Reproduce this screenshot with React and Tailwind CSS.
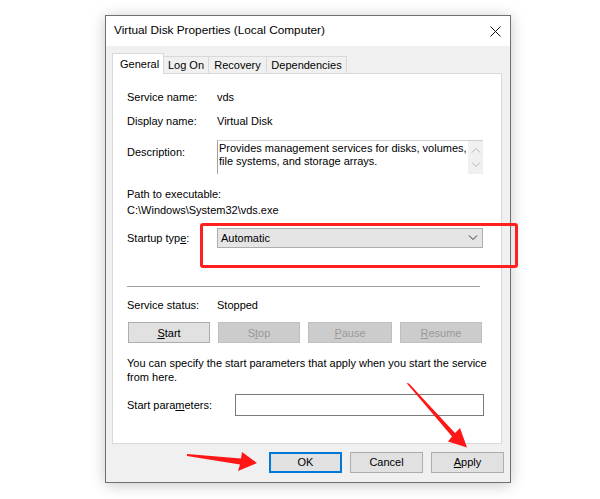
import React from "react";

// little helpers for the win32 look
const font = { fontFamily: '"Liberation Sans", Arial, sans-serif' };

function Chevron({ up = false, className = "" }) {
  return (
    <svg width="10" height="6" viewBox="0 0 10 6" className={className}>
      <path
        d={up ? "M1 5.5 L5 1.5 L9 5.5" : "M1 0.5 L5 4.5 L9 0.5"}
        fill="none"
        stroke="currentColor"
        strokeWidth="1"
      />
    </svg>
  );
}

function Btn({ children, disabled, className = "" }) {
  return (
    <div
      className={`flex items-center justify-center h-[21px] border text-[11px] ${
        disabled
          ? "bg-[#cccccc] border-[#bfbfbf] text-[#9a9a9a]"
          : "bg-[#e1e1e1] border-[#adadad] text-black"
      } ${className}`}
    >
      {children}
    </div>
  );
}

const tabs = [
  { label: "General", w: "w-[52px]" },
  { label: "Log On", w: "w-[45px]" },
  { label: "Recovery", w: "w-[58px]" },
  { label: "Dependencies", w: "w-[80px]" },
];

export default function App() {
  return (
    <div className="relative w-[600px] h-[499px] bg-white overflow-hidden text-black" style={font}>
      <div className="pl-[105px] pt-[15px]">
        {/* window */}
        <div className="w-[406px] h-[468px] border border-[#6f6f6f] bg-[#f0f0f0] shadow-[0_2px_14px_rgba(0,0,0,0.22)] flex flex-col">
          {/* title bar */}
          <div className="h-[30px] bg-white flex items-center justify-between pl-[8px] pr-[9px] shrink-0">
            <span className="text-[11.8px] leading-none">Virtual Disk Properties (Local Computer)</span>
            <svg width="11" height="11" viewBox="0 0 11 11">
              <path d="M0.5 0.5 L10.5 10.5 M10.5 0.5 L0.5 10.5" stroke="#111" strokeWidth="1" />
            </svg>
          </div>

          {/* tabs */}
          <div className="pl-[6px] flex items-end h-[27px] shrink-0">
            {tabs.map((t, i) =>
              i === 0 ? (
                <div
                  key={t.label}
                  className={`relative z-10 h-[21px] pl-[7px] -mb-px bg-white border border-b-0 border-[#d9d9d9] flex items-center text-[11px] ${t.w}`}
                >
                  {t.label}
                </div>
              ) : (
                <div
                  key={t.label}
                  className={`h-[17px] border border-l-0 border-b-0 border-[#d9d9d9] bg-[#f0f0f0] flex items-center justify-center text-[11px] ${t.w}`}
                >
                  {t.label}
                </div>
              )
            )}
          </div>

          {/* tab panel */}
          <div className="ml-[6px] w-[390px] h-[371px] bg-white border border-[#d9d9d9] pl-[14px] pt-[16px] text-[11px] leading-[14px] shrink-0">
            <div className="flex h-[14px]">
              <span className="w-[90px]">Service name:</span>
              <span>vds</span>
            </div>
            <div className="flex h-[14px] mt-[10px]">
              <span className="w-[90px]">Display name:</span>
              <span>Virtual Disk</span>
            </div>
            <div className="flex mt-[12px]">
              <span className="w-[90px] pt-[5px]">Description:</span>
              <div className="w-[266px] h-[34px] flex border-l border-t border-l-[#a0a0a0] border-t-[#cfcfcf]">
                <div className="flex-1 pl-[1px] pt-[1px] leading-[13px]">
                  Provides management services for disks, volumes, file systems, and storage arrays.
                </div>
                <div className="w-[15px] bg-[#f0f0f0] flex flex-col items-center justify-between py-[6px] text-[#b4b4b4]">
                  <Chevron up />
                  <Chevron />
                </div>
              </div>
            </div>
            <div className="h-[14px] mt-[13px]">Path to executable:</div>
            <div className="h-[14px] mt-[2px]">C:\Windows\System32\vds.exe</div>
            <div className="flex items-center mt-[11px]">
              <span className="w-[90px]">
                Startup typ<u>e</u>:
              </span>
              <div className="w-[266px] h-[20px] bg-[#e5e5e5] border border-[#adadad] flex items-center justify-between pl-[3px] pr-[4px]">
                <span>Automatic</span>
                <Chevron className="text-[#333]" />
              </div>
            </div>
            <div className="w-[353px] h-px bg-[#a0a0a0] mt-[38px]" />
            <div className="flex h-[14px] mt-[11px]">
              <span className="w-[90px]">Service status:</span>
              <span>Stopped</span>
            </div>
            <div className="flex gap-[8px] mt-[10px] pl-px">
              <Btn className="w-[82px]">
                <u>S</u>tart
              </Btn>
              <Btn disabled className="w-[82px]">
                S<u>t</u>op
              </Btn>
              <Btn disabled className="w-[84px]">
                <u>P</u>ause
              </Btn>
              <Btn disabled className="w-[82px]">
                <u>R</u>esume
              </Btn>
            </div>
            <div className="mt-[13px] w-[360px]">
              You can specify the start parameters that apply when you start the service from here.
            </div>
            <div className="flex items-center mt-[10px]">
              <span className="w-[108px]">
                Start para<u>m</u>eters:
              </span>
              <div className="w-[249px] h-[22px] border border-[#7a7a7a] bg-white" />
            </div>
          </div>

          {/* dialog buttons */}
          <div className="flex justify-end gap-[8px] pr-[6px] mt-[8px]">
            <div className="w-[73px] h-[21px] border-2 border-[#0078d7] bg-[#e1e1e1] flex items-center justify-center text-[11px]">
              OK
            </div>
            <Btn className="w-[73px]">Cancel</Btn>
            <Btn className="w-[73px]">
              <u>A</u>pply
            </Btn>
          </div>
        </div>
      </div>

      {/* red annotations over the screenshot */}
      <div className="absolute left-[200px] top-[223px] w-[318px] h-[45px] border-[3px] border-[#ff1f1f] rounded-[3px] pointer-events-none" />
      <svg className="absolute left-0 top-0 pointer-events-none" width="600" height="499" viewBox="0 0 600 499">
        <polygon
          points="187,454 241,458.5 242,452 257,463 238,471 240,464.5 187,456"
          fill="#ff1616"
        />
        <polygon
          points="406.5,383 409,383.5 455,433 460,428 467,447.5 448,441.5 452,436.5"
          fill="#ff1616"
        />
      </svg>
    </div>
  );
}
